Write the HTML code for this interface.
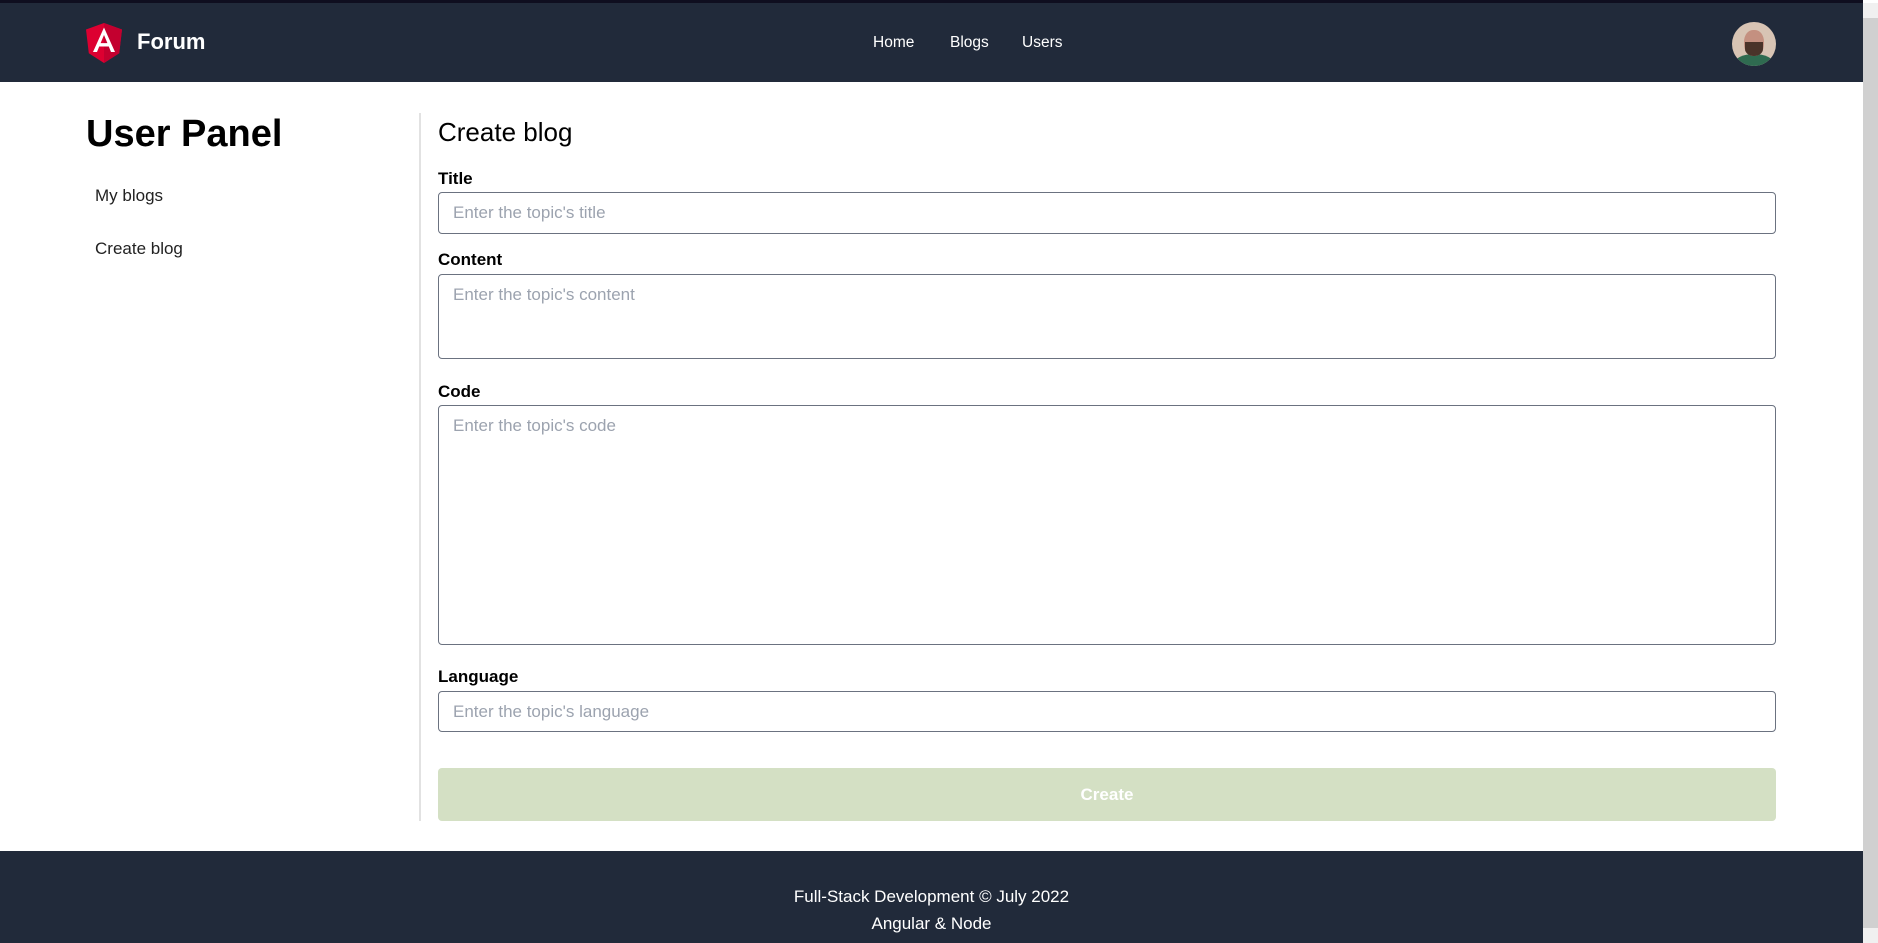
<!DOCTYPE html>
<html><head><meta charset="utf-8"><style>
*{box-sizing:border-box;margin:0;padding:0}
body{width:1878px;height:943px;overflow:hidden;font-family:"Liberation Sans",sans-serif;background:#fff;position:relative;color:#000}
.top{position:absolute;left:0;top:0;width:1863px;height:3px;background:#0f0e1f}
header{position:absolute;left:0;top:3px;width:1863px;height:79px;background:#212a3a}
.logo{position:absolute;left:86px;top:20px}
.brand{position:absolute;left:137px;top:26px;color:#fff;font-size:22px;font-weight:bold}
nav a{position:absolute;top:31px;color:#fff;font-size:15.5px;text-decoration:none}
.av{position:absolute;left:1732px;top:19px;width:44px;height:44px;border-radius:50%;overflow:hidden;background:#d8c4b4}
.av .f{position:absolute;left:12px;top:8px;width:20px;height:26px;border-radius:45%;background:#c49080}
.av .b{position:absolute;left:13px;top:20px;width:18px;height:14px;border-radius:0 0 50% 50%;background:#4a3329}
.av .s{position:absolute;left:2px;top:32px;width:40px;height:20px;border-radius:50% 50% 0 0;background:#2f6b50}
.sb{position:absolute;left:1863px;top:3px;width:15px;height:940px;background:#d0d0d0}
.sb:before{content:"";position:absolute;left:0;top:0;width:15px;height:15px;background:#f0f0f0}
.sb:after{content:"";position:absolute;left:0;bottom:0;width:15px;height:15px;background:#f0f0f0}
h1{position:absolute;left:86px;top:113px;font-size:38px;font-weight:bold}
.side{position:absolute;left:95px;font-size:17px;color:#222}
.div{position:absolute;left:419px;top:113px;width:2px;height:708px;background:#e2e2e2}
h2{position:absolute;left:438px;top:117px;font-size:26px;font-weight:normal}
label{position:absolute;left:438px;font-size:17px;font-weight:bold}
.in{position:absolute;left:438px;width:1338px;border:1px solid #6b7280;border-radius:4px;color:#9ca3af;font-size:17px;padding:10px 14px}
.btn{position:absolute;left:438px;top:768px;width:1338px;height:53px;background:#d4e0c4;border-radius:4px;color:#fff;font-weight:bold;font-size:17px;text-align:center;line-height:53px}
footer{position:absolute;left:0;top:851px;width:1863px;height:92px;background:#212a3a;color:#fff;font-size:17px;text-align:center;padding-top:32px;line-height:27px}
</style></head><body>
<div class="top"></div>
<header>
<svg class="logo" width="36" height="40" viewBox="0 0 36 40"><path d="M18 0L0 6.5l2.8 23.8L18 40l15.2-9.7L36 6.5z" fill="#dd0031"/><path d="M18 0v40l15.2-9.7L36 6.5z" fill="#c3002f"/><path d="M18 4.5L7 29h4l2.2-5.5h9.6L25 29h4zm-3.4 15.6L18 12l3.4 8.1z" fill="#fff"/></svg>
<div class="brand">Forum</div>
<nav><a style="left:873px">Home</a><a style="left:950px">Blogs</a><a style="left:1022px">Users</a></nav>
<div class="av"><div class="s"></div><div class="f"></div><div class="b"></div></div>
</header>
<div class="sb"></div>
<h1>User Panel</h1>
<div class="side" style="top:186px">My blogs</div>
<div class="side" style="top:239px">Create blog</div>
<div class="div"></div>
<h2>Create blog</h2>
<label style="top:169px">Title</label>
<div class="in" style="top:192px;height:42px">Enter the topic's title</div>
<label style="top:250px">Content</label>
<div class="in" style="top:274px;height:85px">Enter the topic's content</div>
<label style="top:382px">Code</label>
<div class="in" style="top:405px;height:240px">Enter the topic's code</div>
<label style="top:667px">Language</label>
<div class="in" style="top:691px;height:41px">Enter the topic's language</div>
<div class="btn">Create</div>
<footer>Full-Stack Development © July 2022<br>Angular &amp; Node</footer>
</body></html>
